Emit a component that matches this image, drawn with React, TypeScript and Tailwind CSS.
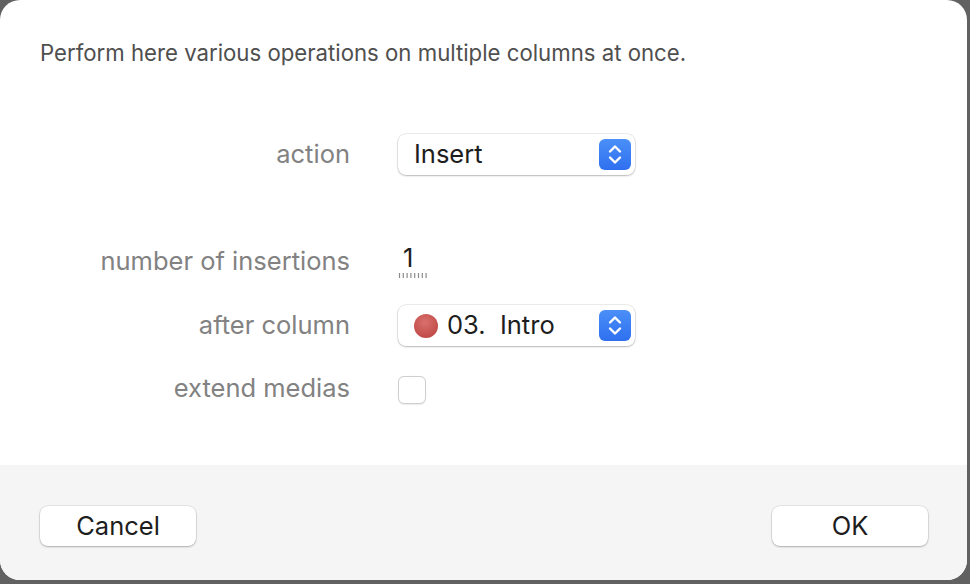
const Stepper = () => (
  <div className="w-[32px] h-[31px] rounded-[6px] bg-gradient-to-b from-[#4b8ff8] to-[#2f6fef] flex items-center justify-center">
    <svg width="32" height="31" viewBox="0 0 32 31" fill="none">
      <path d="M11 12.5 L16 7.5 L21 12.5" stroke="white" strokeWidth="2.4" strokeLinecap="round" strokeLinejoin="round" />
      <path d="M11 18.5 L16 23.5 L21 18.5" stroke="white" strokeWidth="2.4" strokeLinecap="round" strokeLinejoin="round" />
    </svg>
  </div>
);

const Popup = ({ children }: { children: React.ReactNode }) => (
  <div className="w-[237px] h-[41px] rounded-[8px] bg-white flex items-center pl-[16px] pr-[4px] shadow-[0_0_0_0.5px_rgba(0,0,0,0.14),0_1px_2px_rgba(0,0,0,0.22)]">
    <div className="flex-1 flex items-center text-[25.5px] text-[#1d1d1d]">{children}</div>
    <Stepper />
  </div>
);

const Row = ({ label, className, children }: { label: string; className: string; children: React.ReactNode }) => (
  <div className={`flex items-center h-[41px] ${className}`}>
    <div className="w-[350px] text-right text-[25.5px] text-[#828282]">{label}</div>
    <div className="ml-[48px] flex items-center">{children}</div>
  </div>
);

const Button = ({ label }: { label: string }) => (
  <button className="w-[156px] h-[40px] rounded-[8px] bg-white text-[25.5px] text-[#1d1d1d] shadow-[0_0_0_0.5px_rgba(0,0,0,0.12),0_1px_2px_rgba(0,0,0,0.25)]">
    {label}
  </button>
);

export default function App() {
  return (
    <div className="w-[970px] h-[584px] bg-[#616161] overflow-hidden font-['Inter',sans-serif]">
      <div className="w-[967px] h-[580px] rounded-[20px] bg-white flex flex-col overflow-hidden">
        <div className="h-[465px]">
          <p className="pt-[40px] pl-[40px] text-[22.2px] leading-[26px] text-[#4f4f4f]">
            Perform here various operations on multiple columns at once.
          </p>

          <Row label="action" className="mt-[68px]">
            <Popup>Insert</Popup>
          </Row>

          <Row label="number of insertions" className="mt-[66px]">
            <div className="w-[30px] flex flex-col">
              <span className="pl-[5px] text-[25.5px] leading-[26px] text-[#1d1d1d]">1</span>
              <svg width="30" height="5" viewBox="0 0 30 5" className="mt-[2px]">
                {[0, 1, 2, 3, 4, 5, 6, 7].map((i) => (
                  <line key={i} x1={1.5 + i * 3.8} y1="0" x2={1.5 + i * 3.8} y2="5" stroke="#8a8a8a" strokeWidth="1.2" />
                ))}
              </svg>
            </div>
          </Row>

          <Row label="after column" className="mt-[23px]">
            <Popup>
              <span className="w-[24px] h-[24px] rounded-full bg-[radial-gradient(circle_at_45%_35%,#d9706c,#b83f3b)] mr-[9px]" />
              <span>03.&nbsp;&nbsp;Intro</span>
            </Popup>
          </Row>

          <Row label="extend medias" className="mt-[22px]">
            <div className="w-[28px] h-[28px] rounded-[6px] bg-white border border-[#cfcfcf] shadow-[0_0.5px_1px_rgba(0,0,0,0.08)] mt-[2px]" />
          </Row>
        </div>

        <div className="flex-1 bg-[#f5f5f5] flex items-start justify-between pt-[41px] pl-[40px] pr-[39px]">
          <Button label="Cancel" />
          <Button label="OK" />
        </div>
      </div>
    </div>
  );
}
